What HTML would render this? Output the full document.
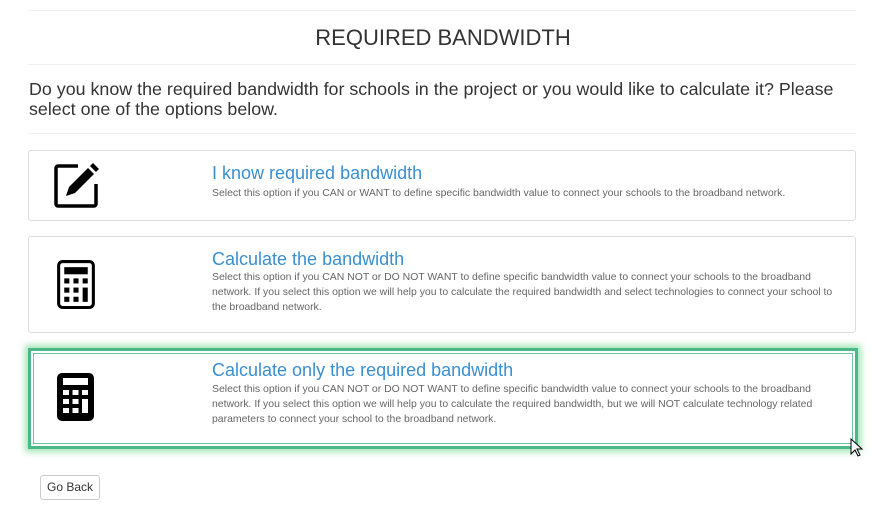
<!DOCTYPE html>
<html><head><style>
body{margin:0;width:886px;height:508px;background:#fff;font-family:"Liberation Sans",Arial,sans-serif;position:relative;overflow:hidden}
.hr{position:absolute;left:28px;width:828px;height:1px;background:#eee}
.t{position:absolute;left:0;width:886px;text-align:center;top:25px;font-size:22px;color:#333}
.p{position:absolute;left:29px;top:79px;width:830px;font-size:17.85px;line-height:20px;color:#333}
.card{position:absolute;left:28px;width:826px;border:1px solid #ddd;border-radius:3px;background:#fff}
.h{position:absolute;left:183px;font-size:18px;color:#3a8fd0}
.d{position:absolute;left:183px;width:618px;font-size:10.45px;line-height:15px;color:#666}
.ic{position:absolute}
.sel{border:3px solid #4cb88a;border-radius:0;box-shadow:0 0 6px 3px rgba(90,210,120,.55),inset 0 0 0 2px #fff,inset 0 0 0 3px #6cc79e}
.btn{position:absolute;left:40px;top:475px;width:58px;height:23px;border:1px solid #ccc;border-radius:3px;font-size:12px;color:#333;text-align:center;line-height:23px}
</style></head><body>
<div class="hr" style="top:10px"></div>
<div class="t">REQUIRED BANDWIDTH</div>
<div class="hr" style="top:64px"></div>
<div class="p">Do you know the required bandwidth for schools in the project or you would like to calculate it? Please select one of the options below.</div>
<div class="hr" style="top:133px"></div>

<div class="card" style="top:150px;height:69px">
<svg class="ic" style="left:25px;top:11px" width="46" height="46" viewBox="0 0 46 46">
<path d="M24 4H4a2 2 0 0 0-2 2v36a2 2 0 0 0 2 2h36a2 2 0 0 0 2-2V22" fill="none" stroke="#000" stroke-width="3.5"/>
<path d="M12 34l3-9L34 6l6 6L21 31z" fill="#000"/><path d="M36 4l3-3 6 6-3 3z" fill="#000"/>
</svg>
<div class="h" style="top:12px">I know required bandwidth</div>
<div class="d" style="top:35px">Select this option if you CAN or WANT to define specific bandwidth value to connect your schools to the broadband network.</div>
</div>

<div class="card" style="top:236px;height:95px">
<svg class="ic" style="left:28px;top:23px" width="38" height="49" viewBox="0 0 37 48">
<rect x="1.5" y="1.5" width="34" height="45" rx="4" fill="none" stroke="#000" stroke-width="3"/>
<rect x="7" y="7" width="23" height="7" fill="#000"/>
<g fill="#000"><rect x="7" y="18" width="5" height="5"/><rect x="16" y="18" width="5" height="5"/><rect x="25" y="18" width="5" height="5"/><rect x="7" y="27" width="5" height="5"/><rect x="16" y="27" width="5" height="5"/><rect x="7" y="36" width="5" height="5"/><rect x="16" y="36" width="5" height="5"/><rect x="25" y="27" width="5" height="14"/></g>
</svg>
<div class="h" style="top:12px">Calculate the bandwidth</div>
<div class="d" style="top:33px;width:628px">Select this option if you CAN NOT or DO NOT WANT to define specific bandwidth value to connect your schools to the broadband network. If you select this option we will help you to calculate the required bandwidth and select technologies to connect your school to the broadband network.</div>
</div>

<div class="card sel" style="top:348px;height:95px;width:824px">
<svg class="ic" style="left:26px;top:22px" width="37" height="48" viewBox="0 0 37 48">
<rect x="0" y="0" width="37" height="48" rx="5" fill="#000"/>
<rect x="6" y="5" width="25" height="7" fill="#fff"/>
<g fill="#fff"><rect x="6" y="17" width="6" height="5"/><rect x="15.5" y="17" width="6" height="5"/><rect x="25" y="17" width="6" height="5"/><rect x="6" y="26" width="6" height="5"/><rect x="15.5" y="26" width="6" height="5"/><rect x="6" y="35" width="6" height="5"/><rect x="15.5" y="35" width="6" height="5"/><rect x="25" y="26" width="6" height="14"/></g>
</svg>
<div class="h" style="top:9px;left:181px">Calculate only the required bandwidth</div>
<div class="d" style="top:31px;left:181px">Select this option if you CAN NOT or DO NOT WANT to define specific bandwidth value to connect your schools to the broadband network. If you select this option we will help you to calculate the required bandwidth, but we will NOT calculate technology related parameters to connect your school to the broadband network.</div>
</div>

<svg style="position:absolute;left:850px;top:438px" width="14" height="20" viewBox="0 0 14 20"><path d="M1 1v15l4-4 3 6 2-1-3-6h5z" fill="#fff" stroke="#000" stroke-width="1"/></svg>

<div class="btn">Go Back</div>
</body></html>
